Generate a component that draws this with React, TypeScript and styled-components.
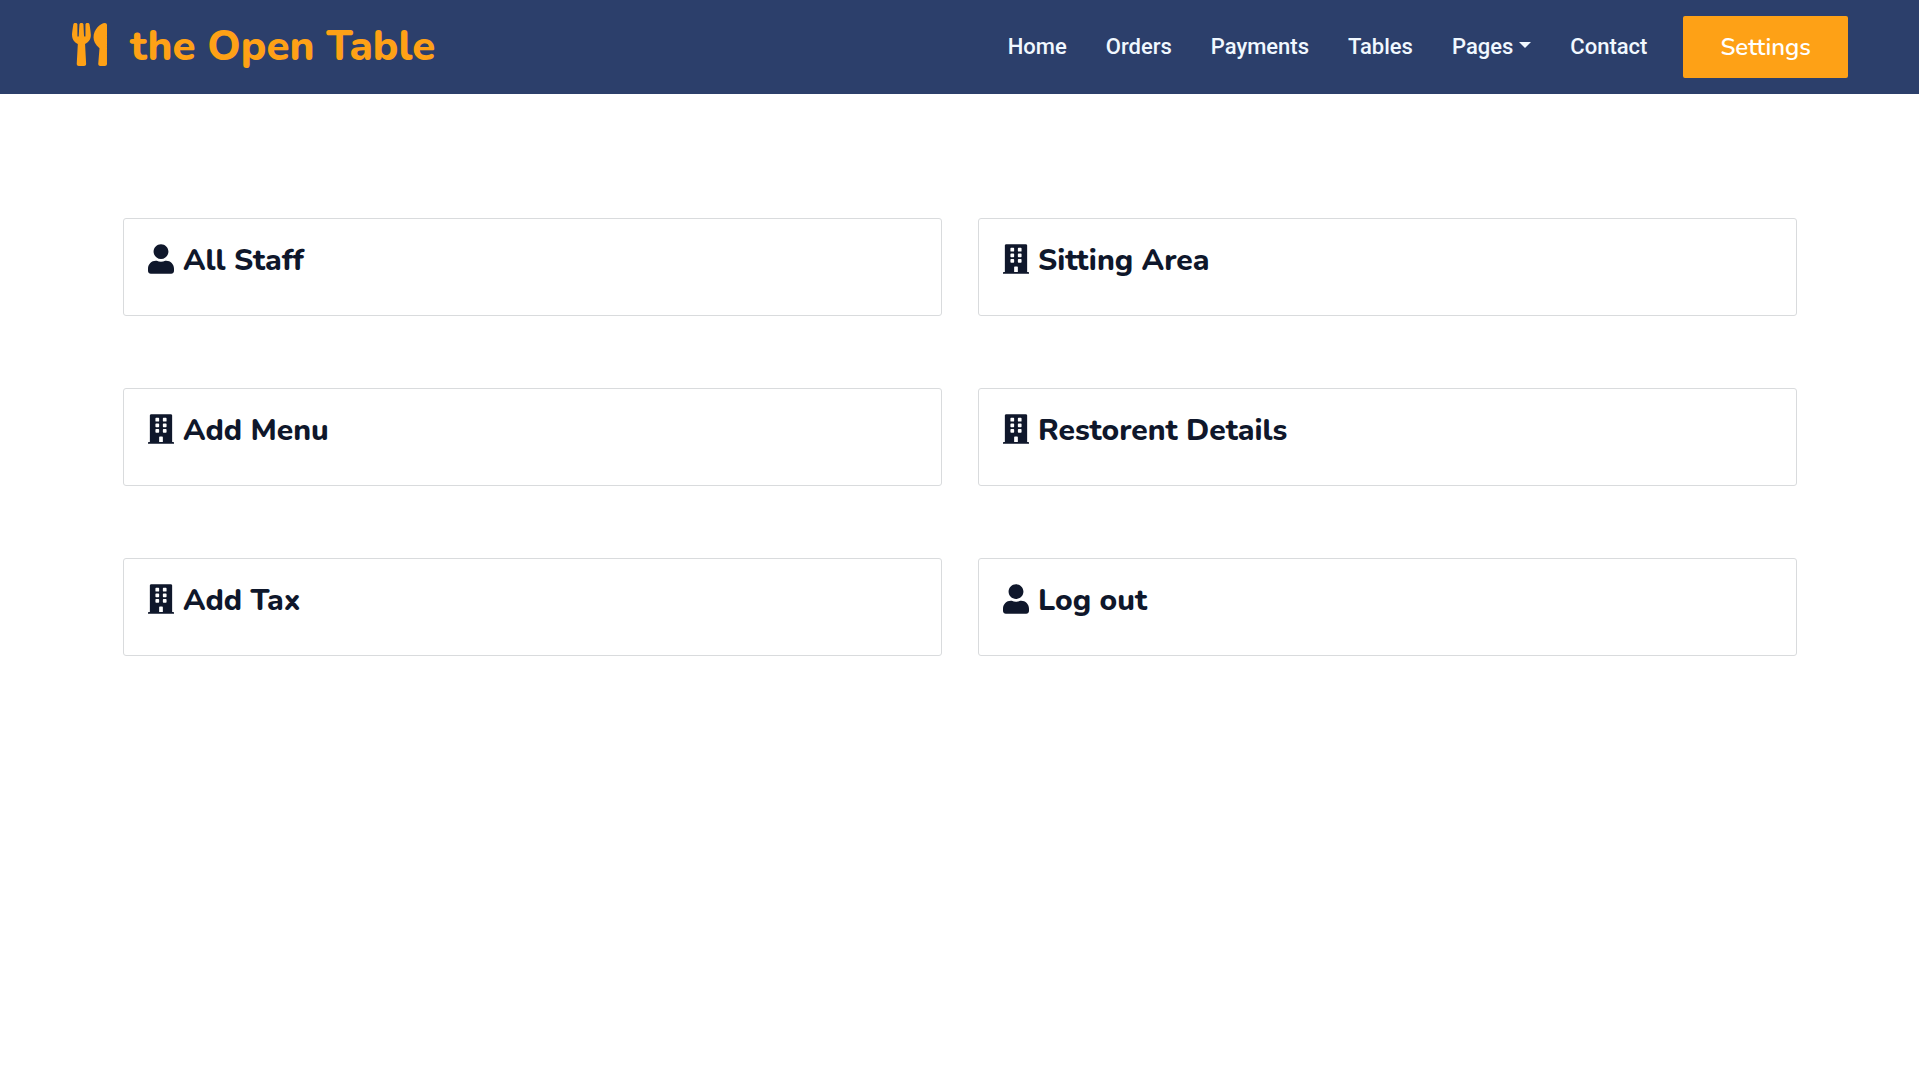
import React from 'react';
import styled, { createGlobalStyle } from 'styled-components';
import { FaBuilding, FaUser, FaUtensils } from 'react-icons/fa';
import type { IconType } from 'react-icons';

const GlobalStyle = createGlobalStyle`
  *, *::before, *::after { box-sizing: border-box; }
  body {
    margin: 0;
    background: #fff;
    color: #0f172b;
    font-family: Nunito, Lato, 'Open Sans', sans-serif;
    font-size: 18px;
  }
`;

const Navbar = styled.header`
  display: flex;
  align-items: center;
  justify-content: space-between;
  padding: 16px 71px 16px 72px;
  background: #2c3f6b;
`;

const Brand = styled.a`
  display: flex;
  align-items: center;
  gap: 23px;
  color: #fea116;
  text-decoration: none;
`;

const BrandName = styled.h1`
  margin: 0;
  font-size: 42px;
  font-weight: 800;
  line-height: 52px;
  white-space: nowrap;
`;

const BrandIcon = styled(FaUtensils)`
  width: 35px;
  height: 43px;
  margin-bottom: 6px;
`;

const Menu = styled.nav`
  display: flex;
  align-items: center;
  gap: 36px;
`;

const NavList = styled.div`
  display: flex;
  align-items: center;
  gap: 39px;
`;

const NavLink = styled.a`
  color: #f1f8ff;
  font-family: Roboto, sans-serif;
  font-size: 22px;
  font-weight: 500;
  line-height: 32px;
  text-decoration: none;
`;

const NavToggle = styled.button`
  display: flex;
  align-items: center;
  gap: 6px;
  padding: 0;
  border: 0;
  background: none;
  color: #f1f8ff;
  font-family: Roboto, sans-serif;
  font-size: 22px;
  font-weight: 500;
  line-height: 32px;
  cursor: pointer;

  &::after {
    content: '';
    margin-bottom: 4px;
    border: 6px solid transparent;
    border-top-color: currentColor;
    border-bottom: 0;
  }
`;

const SettingsButton = styled.button`
  padding: 16px 35px;
  border: 2px solid #fea116;
  border-radius: 2px;
  background: #fea116;
  color: #fff;
  font-family: inherit;
  font-size: 24px;
  font-weight: 600;
  line-height: 26px;
  cursor: pointer;
`;

const Grid = styled.main`
  display: grid;
  grid-template-columns: repeat(2, minmax(0, 1fr));
  gap: 72px 36px;
  padding: 124px 122px 72px 123px;
`;

const Card = styled.a`
  display: block;
  padding: 23px 24px 35px;
  border: 1px solid #d9dbdd;
  border-radius: 3px;
  color: inherit;
  text-decoration: none;
`;

const CardTitle = styled.h2`
  display: flex;
  align-items: center;
  gap: 9px;
  margin: 0;
  font-size: 30px;
  font-weight: 800;
  line-height: 38px;

  svg {
    width: 26px;
    height: 30px;
    margin-bottom: 4px;
  }
`;

const cards: { title: string; icon: IconType }[] = [
  { title: 'All Staff', icon: FaUser },
  { title: 'Sitting Area', icon: FaBuilding },
  { title: 'Add Menu', icon: FaBuilding },
  { title: 'Restorent Details', icon: FaBuilding },
  { title: 'Add Tax', icon: FaBuilding },
  { title: 'Log out', icon: FaUser },
];

export default function App() {
  return (
    <>
      <GlobalStyle />
      <Navbar>
        <Brand href="#">
          <BrandIcon aria-hidden />
          <BrandName>the Open Table</BrandName>
        </Brand>
        <Menu>
          <NavList>
            {['Home', 'Orders', 'Payments', 'Tables'].map((label) => (
              <NavLink key={label} href="#">{label}</NavLink>
            ))}
            <NavToggle type="button">Pages</NavToggle>
            <NavLink href="#">Contact</NavLink>
          </NavList>
          <SettingsButton type="button">Settings</SettingsButton>
        </Menu>
      </Navbar>
      <Grid>
        {cards.map(({ title, icon: Icon }) => (
          <Card key={title} href="#">
            <CardTitle>
              <Icon aria-hidden />
              {title}
            </CardTitle>
          </Card>
        ))}
      </Grid>
    </>
  );
}
